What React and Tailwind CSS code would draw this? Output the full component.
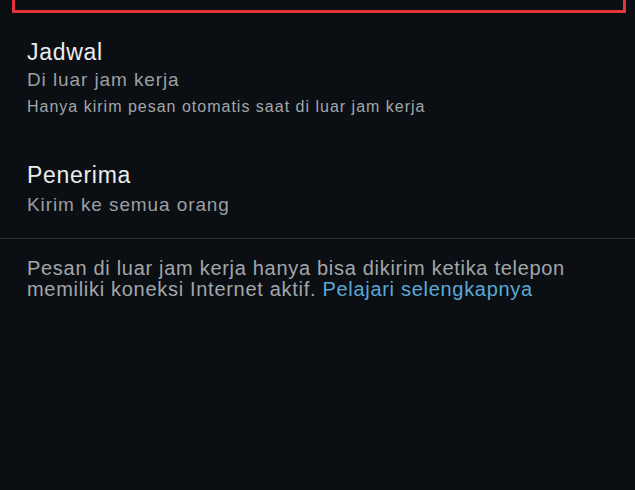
export default function App() {
  return (
    <div className="min-h-screen w-full bg-[#0b0f13] font-['Liberation_Sans',Arial,sans-serif]">
      <div className="ml-3 mr-[9px] h-[13px] border-x-[3px] border-b-[3px] border-[#e5323b]" />

      <div className="px-[27px] pt-[26px]">
        <div className="text-[23px] leading-[26px] tracking-[0.7px] text-[#eceded]">Jadwal</div>
        <div className="mt-[4px] text-[19px] leading-[22px] tracking-[0.9px] text-[#9b9fa2]">Di luar jam kerja</div>
        <div className="mt-[6px] text-[16px] leading-[20px] tracking-[1px] text-[#a3a6a9]">
          Hanya kirim pesan otomatis saat di luar jam kerja
        </div>
      </div>

      <div className="px-[27px] pt-[45px]">
        <div className="text-[23px] leading-[26px] tracking-[0.7px] text-[#eceded]">Penerima</div>
        <div className="mt-[6px] text-[19px] leading-[22px] tracking-[0.9px] text-[#9b9fa2]">Kirim ke semua orang</div>
      </div>

      <div className="mt-[22px] h-px w-full bg-[#2a2f33]" />

      <div className="pl-[27px] pr-[30px] pt-[19px] text-[20px] leading-[21px] tracking-[0.7px] text-[#a3a6a9]">
        <p>Pesan di luar jam kerja hanya bisa dikirim ketika telepon</p>
        <p>
          memiliki koneksi Internet aktif.{" "}
          <span className="text-[#5aa9d6]">Pelajari selengkapnya</span>
        </p>
      </div>
    </div>
  );
}
